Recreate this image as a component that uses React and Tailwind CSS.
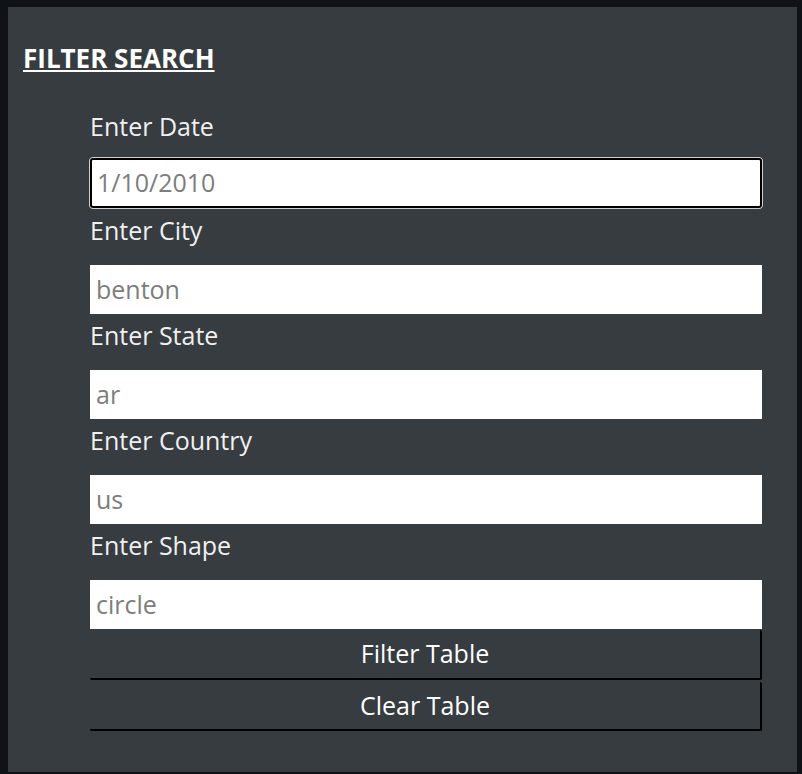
import React, { useState } from 'react';

const fields = [
  { label: 'Enter Date', value: '1/10/2010', focused: true },
  { label: 'Enter City', value: 'benton' },
  { label: 'Enter State', value: 'ar' },
  { label: 'Enter Country', value: 'us' },
  { label: 'Enter Shape', value: 'circle' },
];

const Field = ({ label, value, focused, first }) => (
  <div className="flex flex-col">
    <label className={`block text-[25px] leading-[30px] text-[#f0f0f0] ${first ? 'mt-0 mb-[16px]' : 'mt-[6px] mb-[20px]'}`}>{label}</label>
    {focused ? (
      <div className="h-[52px] -mx-px rounded-[4px] border border-[#cfcfcf] bg-white">
        <div className="h-full rounded-[3px] border-2 border-black px-[5px] flex items-center text-[25px] text-[#7d7d7d]">{value}</div>
      </div>
    ) : (
      <div className="h-[49px] bg-white px-[6px] flex items-center text-[25px] text-[#7d7d7d]">{value}</div>
    )}
  </div>
);

export default function App() {
  const [rows] = useState(fields);
  return (
    <div className="min-h-screen bg-[#0f1317] pt-[7px] pl-[8px] pr-[5px] pb-[2px]" style={{ fontFamily: '"Open Sans", "Noto Sans", sans-serif' }}>
      <div className="h-[765px] bg-[#373c40] pl-[15px] pt-[34px]">
        <h4 className="text-[26px] font-bold underline text-white leading-[34px] decoration-2 underline-offset-[2px]">FILTER SEARCH</h4>
        <div className="ml-[67px] w-[672px] mt-[36px]">
          {rows.map((f, i) => <Field key={f.label} {...f} first={i === 0} />)}
          <button className="block w-full h-[50px] mt-px text-[25px] text-white bg-[#373c40] border-r-2 border-b-2 border-black rounded-[2px]">Filter Table</button>
          <button className="block w-full h-[49px] mt-[2px] text-[25px] text-white bg-[#373c40] border-r-2 border-b-2 border-black rounded-[2px]">Clear Table</button>
        </div>
      </div>
    </div>
  );
}
